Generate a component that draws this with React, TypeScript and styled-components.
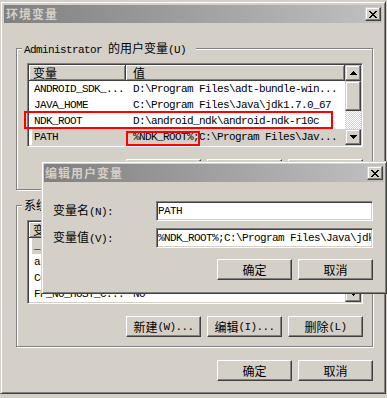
import React from "react";
import styled, { createGlobalStyle, css } from "styled-components";

const GlobalStyle = createGlobalStyle`
  html, body { margin: 0; padding: 0; background: #d4d0c8; overflow: hidden; }
  body {
    font-family: "Liberation Mono", "DejaVu Sans Mono", monospace;
    font-size: 11px;
    letter-spacing: -0.6px;
    color: #000;
  }
`;

const raised = css`
  border: 1px solid;
  border-color: #fff #404040 #404040 #fff;
  box-shadow: inset -1px -1px #808080, inset 1px 1px #d4d0c8;
  background: #d4d0c8;
`;

const raisedSoft = css`
  border: 1px solid;
  border-color: #d4d0c8 #404040 #404040 #d4d0c8;
  box-shadow: inset -1px -1px #808080, inset 1px 1px #fff;
  background: #d4d0c8;
`;

const sunken = css`
  border: 1px solid;
  border-color: #808080 #fff #fff #808080;
  box-shadow: inset 1px 1px #404040, inset -1px -1px #d4d0c8;
`;

const Han = styled.span`
  font-family: "Noto Sans CJK SC", "Noto Sans CJK JP", sans-serif;
  font-size: 12px;
  letter-spacing: 0;
`;

function Txt({ children }: { children: string }) {
  const parts = children.split(/([\u3000-\u9fff\uff00-\uffef]+)/);
  return <>{parts.map((p, i) => (i % 2 ? <Han key={i}>{p}</Han> : p))}</>;
}

const Screen = styled.div`
  position: relative;
  width: 387px;
  height: 398px;
  padding-top: 1px;
  box-sizing: border-box;
  overflow: hidden;
`;

const Window = styled.div`
  width: 386px;
  height: 393px;
  box-sizing: border-box;
  border: 1px solid;
  border-color: #d4d0c8 #404040 #404040 #d4d0c8;
  box-shadow: inset 1px 1px #fff, inset -1px -1px #808080;
  padding: 3px;
  background: #d4d0c8;
  display: flex;
  flex-direction: column;
`;

const TitleBar = styled.div<{ $pl: number }>`
  height: 18px;
  flex: none;
  display: flex;
  align-items: center;
  justify-content: space-between;
  padding: 0 1px 0 ${(p) => p.$pl}px;
  background: linear-gradient(to right, #808080, #c0c0c0);
`;

const TitleText = styled.span`
  font-family: "Noto Sans CJK SC", "Noto Sans CJK JP", sans-serif;
  font-weight: bold;
  font-size: 12px;
  letter-spacing: 1px;
  line-height: 18px;
  color: #d4d0c8;
`;

const CloseButton = styled.div`
  ${raisedSoft};
  width: 16px;
  height: 14px;
  box-sizing: border-box;
  display: flex;
  align-items: center;
  justify-content: center;
`;

const X_ROWS = ["11000011", "01100110", "00111100", "00011000", "00111100", "01100110", "11000011"];

function CloseGlyph() {
  return (
    <svg width="8" height="7" shapeRendering="crispEdges">
      {X_ROWS.flatMap((r, y) =>
        [...r].map((c, x) =>
          c === "1" ? <rect key={`${x}-${y}`} x={x} y={y} width="1" height="1" fill="#000" /> : null
        )
      )}
    </svg>
  );
}

function Arrow({ down }: { down?: boolean }) {
  const rows = [1, 3, 5, 7];
  const ordered = down ? [...rows].reverse() : rows;
  return (
    <svg width="7" height="4" shapeRendering="crispEdges">
      {ordered.map((w, y) => (
        <rect key={y} x={(7 - w) / 2} y={y} width={w} height="1" fill="#000" />
      ))}
    </svg>
  );
}

const Body = styled.div`
  display: flex;
  flex-direction: column;
  padding: 25px 9px 0 12px;
`;

const Group = styled.div<{ $mt: number }>`
  position: relative;
  width: 357px;
  height: 142px;
  box-sizing: border-box;
  margin-top: ${(p) => p.$mt}px;
  border: 1px solid #808080;
  box-shadow: inset 1px 1px #fff, 1px 1px #fff;
  padding: 14px 9px 9px 10px;
  display: flex;
  flex-direction: column;
`;

const GroupLabel = styled.div`
  position: absolute;
  left: 5px;
  top: -8px;
  line-height: 14px;
  padding: 0 10px 0 2px;
  background: #d4d0c8;
  white-space: pre;
`;

const ListFrame = styled.div`
  ${sunken};
  width: 336px;
  height: 84px;
  flex: none;
  box-sizing: border-box;
  padding: 1px;
  background: #fff;
  display: flex;
`;

const ListPane = styled.div`
  flex: 1;
  display: flex;
  flex-direction: column;
  overflow: hidden;
`;

const HeaderRow = styled.div`
  height: 16px;
  flex: none;
  display: flex;
  background: #d4d0c8;
`;

const HeaderCell = styled.div<{ $w?: number; $pl: number }>`
  box-sizing: border-box;
  ${(p) => (p.$w ? `width: ${p.$w}px; flex: none;` : "flex: 1;")}
  height: 16px;
  line-height: 15px;
  border-right: 1px solid #404040;
  border-bottom: 1px solid #404040;
  box-shadow: inset 1px 1px #fff, inset -1px -1px #808080;
  padding-left: ${(p) => p.$pl}px;
`;

const ItemRow = styled.div<{ $selected?: boolean }>`
  display: grid;
  grid-template-columns: 94px 1fr;
  margin-left: 3px;
  height: 16px;
  flex: none;
  line-height: 16px;
  background: ${(p) => (p.$selected ? "#d4d0c8" : "#fff")};
`;

const NameCell = styled.div`
  padding-left: 2px;
  overflow: hidden;
  white-space: pre;
`;

const ValueCell = styled.div`
  padding-left: 7px;
  overflow: hidden;
  white-space: pre;
`;

const ScrollBar = styled.div`
  width: 16px;
  flex: none;
  display: flex;
  flex-direction: column;
`;

const ScrollButton = styled.div`
  ${raisedSoft};
  width: 16px;
  height: 16px;
  flex: none;
  box-sizing: border-box;
  display: flex;
  align-items: center;
  justify-content: center;
`;

const Thumb = styled.div`
  ${raisedSoft};
  height: 30px;
  flex: none;
  box-sizing: border-box;
`;

const Track = styled.div`
  flex: 1;
  background-color: #fff;
  background-image: repeating-conic-gradient(#d4d0c8 0% 25%, #fff 0% 50%);
  background-size: 2px 2px;
`;

const ButtonRow = styled.div<{ $mt: number }>`
  display: flex;
  justify-content: flex-end;
  gap: 6px;
  margin-top: ${(p) => p.$mt}px;
`;

const Button = styled.div`
  ${raised};
  width: 75px;
  height: 21px;
  box-sizing: border-box;
  display: flex;
  align-items: center;
  justify-content: center;
  line-height: 16px;
  white-space: pre;
`;

const Annotation = styled.div<{ $x: number; $y: number; $w: number; $h: number }>`
  position: absolute;
  left: ${(p) => p.$x}px;
  top: ${(p) => p.$y}px;
  width: ${(p) => p.$w}px;
  height: ${(p) => p.$h}px;
  box-sizing: border-box;
  border: 2px solid #f00;
`;

const Dialog = styled.div`
  position: absolute;
  left: 41px;
  top: 161px;
  width: 346px;
  height: 133px;
  box-sizing: border-box;
  border: 1px solid;
  border-color: #d4d0c8 #404040 #404040 #d4d0c8;
  box-shadow: inset 1px 1px #fff, inset -1px -1px #808080;
  padding: 2px;
  background: #d4d0c8;
  display: flex;
  flex-direction: column;
`;

const DialogBody = styled.div`
  padding: 19px 11px 11px 9px;
  display: flex;
  flex-direction: column;
`;

const FormGrid = styled.div`
  display: grid;
  grid-template-columns: 103px 217px;
  row-gap: 7px;
  align-items: center;
`;

const FieldLabel = styled.div`
  white-space: pre;
  line-height: 16px;
`;

const Field = styled.input`
  ${sunken};
  height: 20px;
  box-sizing: border-box;
  padding: 0 1px;
  margin: 0;
  background: #fff;
  font: inherit;
  letter-spacing: inherit;
  color: #000;
  outline: none;
`;

type Row = { name: string; value: string; selected?: boolean };

const userRows: Row[] = [
  { name: "ANDROID_SDK_...", value: "D:\\Program Files\\adt-bundle-win..." },
  { name: "JAVA_HOME", value: "C:\\Program Files\\Java\\jdk1.7.0_67" },
  { name: "NDK_ROOT", value: "D:\\android_ndk\\android-ndk-r10c" },
  { name: "PATH", value: "%NDK_ROOT%;C:\\Program Files\\Jav...", selected: true },
];

const systemRows: Row[] = [
  { name: "_JAVA_OPTIONS", value: "-Xmx512M", selected: true },
  { name: "asl.log", value: "Destination=file" },
  { name: "ComSpec", value: "C:\\WINDOWS\\system32\\cmd.exe" },
  { name: "FP_NO_HOST_C...", value: "NO" },
];

const PATH_VALUE = "%NDK_ROOT%;C:\\Program Files\\Java\\jdk1.7.0_67\\bin;%SystemRoot%";

function VarList({ rows }: { rows: Row[] }) {
  return (
    <ListFrame>
      <ListPane>
        <HeaderRow>
          <HeaderCell $w={97} $pl={4}>
            <Txt>变量</Txt>
          </HeaderCell>
          <HeaderCell $pl={7}>
            <Txt>值</Txt>
          </HeaderCell>
        </HeaderRow>
        {rows.map((r) => (
          <ItemRow key={r.name} $selected={r.selected}>
            <NameCell>{r.name}</NameCell>
            <ValueCell>{r.value}</ValueCell>
          </ItemRow>
        ))}
      </ListPane>
      <ScrollBar>
        <ScrollButton>
          <Arrow />
        </ScrollButton>
        <Thumb />
        <Track />
        <ScrollButton>
          <Arrow down />
        </ScrollButton>
      </ScrollBar>
    </ListFrame>
  );
}

function ListButtons() {
  return (
    <ButtonRow $mt={12}>
      <Button>
        <Txt>新建(W)...</Txt>
      </Button>
      <Button>
        <Txt>编辑(I)...</Txt>
      </Button>
      <Button>
        <Txt>删除(L)</Txt>
      </Button>
    </ButtonRow>
  );
}

export default function App() {
  return (
    <>
      <GlobalStyle />
      <Screen>
        <Window>
          <TitleBar $pl={2}>
            <TitleText>环境变量</TitleText>
            <CloseButton>
              <CloseGlyph />
            </CloseButton>
          </TitleBar>
          <Body>
            <Group $mt={0}>
              <GroupLabel>
                <Txt>Administrator 的用户变量(U)</Txt>
              </GroupLabel>
              <VarList rows={userRows} />
              <ListButtons />
            </Group>
            <Group $mt={15}>
              <GroupLabel>
                <Txt>系统变量(S)</Txt>
              </GroupLabel>
              <VarList rows={systemRows} />
              <ListButtons />
            </Group>
            <ButtonRow $mt={13}>
              <Button>
                <Txt>确定</Txt>
              </Button>
              <Button>
                <Txt>取消</Txt>
              </Button>
            </ButtonRow>
          </Body>
        </Window>

        <Annotation $x={24} $y={111} $w={309} $h={18} />
        <Annotation $x={126} $y={131} $w={74} $h={15} />

        <Dialog>
          <TitleBar $pl={1}>
            <TitleText>编辑用户变量</TitleText>
            <CloseButton>
              <CloseGlyph />
            </CloseButton>
          </TitleBar>
          <DialogBody>
            <FormGrid>
              <FieldLabel>
                <Txt>变量名(N):</Txt>
              </FieldLabel>
              <Field defaultValue="PATH" readOnly />
              <FieldLabel>
                <Txt>变量值(V):</Txt>
              </FieldLabel>
              <Field defaultValue={PATH_VALUE} readOnly />
            </FormGrid>
            <ButtonRow $mt={11}>
              <Button>
                <Txt>确定</Txt>
              </Button>
              <Button>
                <Txt>取消</Txt>
              </Button>
            </ButtonRow>
          </DialogBody>
        </Dialog>
      </Screen>
    </>
  );
}
